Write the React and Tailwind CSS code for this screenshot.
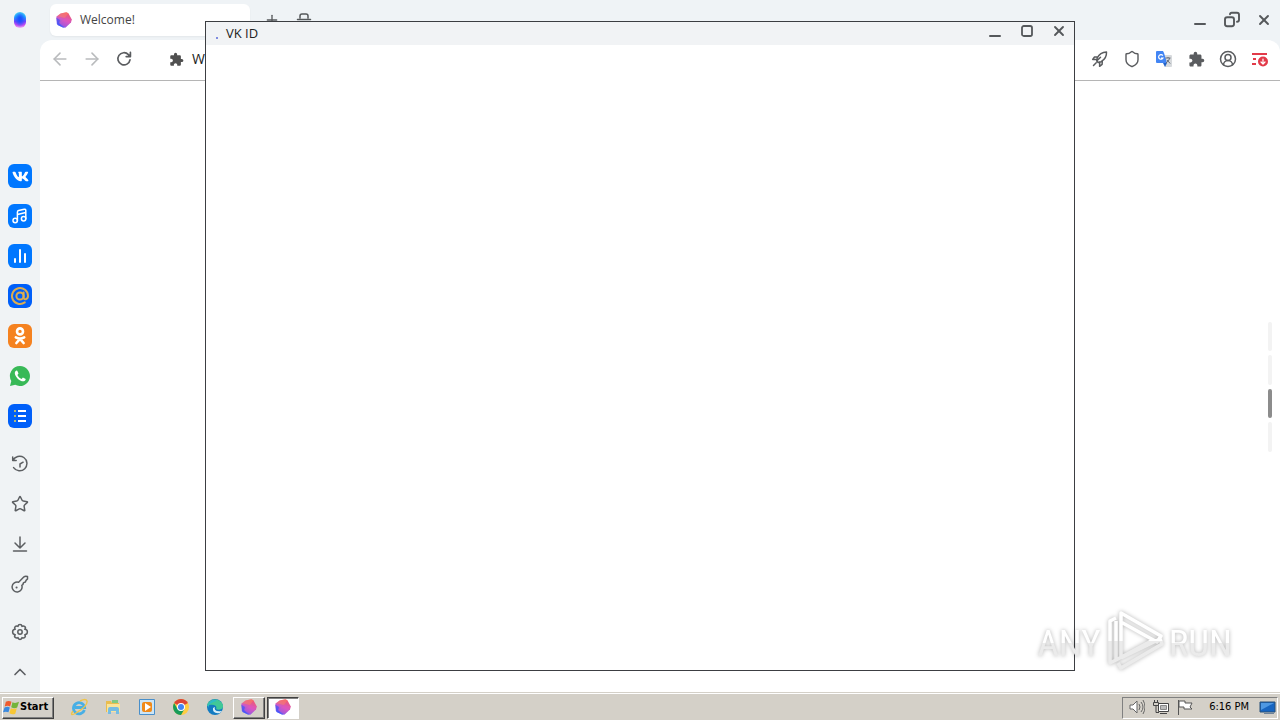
import React from "react";
import { ArrowLeft, ArrowRight, Shield, CircleUserRound, Star, ChevronUp, Plus, X } from "lucide-react";
import { MdExtension } from "react-icons/md";
import { FaVk } from "react-icons/fa";

function Gem({ id, size }) {
  return (
    <svg width={size} height={size} viewBox="0 0 16 16" aria-hidden="true">
      <defs>
        <linearGradient id={id} x1="0.7" y1="0" x2="0.2" y2="1">
          <stop offset="0" stopColor="#f5586c" />
          <stop offset="0.5" stopColor="#cf5ac4" />
          <stop offset="1" stopColor="#4a5cff" />
        </linearGradient>
      </defs>
      <path d="M4.6 1.6 10.4.3 12.4 1.2 15.8 7.6 15 10.4 9.6 15.4 7.4 15.7 1.6 13 .8 11.2.3 5.8 1 4.2Z" fill={`url(#${id})`} />
      <path d="M4.6 1.6 10.4.3 12.4 1.2 9 6 1 4.2Z" fill="#ff8560" opacity=".5" />
      <path d="M9 6 15.8 7.6 9.6 15.4 3 11Z" fill="#ef50c0" opacity=".35" />
      <path d="M.3 5.8 4 8 3 11 7.4 15.7 1.6 13Z" fill="#3454ff" opacity=".6" />
    </svg>
  );
}

function IconButton({ label, children, className = "" }) {
  return (
    <button type="button" aria-label={label} className={`flex size-6 shrink-0 items-center justify-center ${className}`}>
      {children}
    </button>
  );
}

const line = { fill: "none", stroke: "currentColor", strokeWidth: 1.5, strokeLinecap: "round", strokeLinejoin: "round" };

function Sidebar() {
  return (
    <nav aria-label="Sidebar" className="flex w-10 shrink-0 flex-col items-center bg-[#f0f3f5] pt-2 pb-2 text-[#5c5f62]">
      <IconButton label="Assistant">
        <span className="h-4 w-3 rounded-full bg-[radial-gradient(ellipse_at_50%_45%,#1a50ff_15%,transparent_65%),linear-gradient(#55e4f4,#1fa4ff_32%,#6b45ff_58%,#d04df0_82%,#efb6f5)]" />
      </IconButton>
      <div className="mt-33 flex flex-col gap-4">
        <IconButton label="VK" className="rounded-md bg-[#0077ff] text-white"><FaVk size={17} /></IconButton>
        <IconButton label="Music" className="rounded-md bg-[#0077ff] text-white">
          <svg width="18" height="18" viewBox="0 0 18 18" {...line}>
            <circle cx="4.2" cy="13.5" r="2.2" /><circle cx="12.6" cy="11.7" r="2.2" />
            <path d="M6.4 13.5V5.2Q6.4 3.9 7.6 3.6L13.3 2.3Q14.8 2.1 14.8 3.4V11.7M6.4 7.4 14.8 5.5" />
          </svg>
        </IconButton>
        <IconButton label="Charts" className="rounded-md bg-[#0077ff] text-white">
          <svg width="16" height="16" viewBox="0 0 16 16" {...line} strokeWidth="2"><path d="M3 11v3M8 2v12M13 6v8" /></svg>
        </IconButton>
        <IconButton label="Mail" className="rounded-md bg-[#005ff9] text-[#ddad50]">
          <svg width="20" height="20" viewBox="0 0 20 20" {...line} strokeWidth="2">
            <circle cx="10" cy="10" r="3.6" /><path d="M13.6 6.5v4.8c0 3.2 4.4 2.2 4.4-1.3A8 8 0 1 0 14.8 16.4" />
          </svg>
        </IconButton>
        <IconButton label="OK" className="rounded-md bg-[#f58220] text-white">
          <svg width="18" height="20" viewBox="0 0 18 20" {...line} strokeWidth="2.6">
            <circle cx="9" cy="5.4" r="3" /><path d="M4.8 11.3Q9 13.8 13.2 11.3M9 12.8 5.4 17M9 12.8l3.6 4.2" />
          </svg>
        </IconButton>
        <IconButton label="WhatsApp">
          <svg width="22" height="22" viewBox="0 0 22 22">
            <path d="M11 1a10 10 0 1 1-4.8 18.8L1 21l1.3-5A10 10 0 0 1 11 1Z" fill="#38b957" />
            <path d="M7.4 5.6c-1.6.7-2 2.5-1.2 4.3 1.3 3 3.7 5.4 6.7 6.3 1.9.5 3.8-.4 3.8-2.3l-2.8-1.5-1.3 1.5c-2-.8-3.3-2.1-4.2-4l1.1-1.3-1.2-2.9Z" fill="white" />
          </svg>
        </IconButton>
        <IconButton label="Services" className="rounded-md bg-[#005ff9]">
          <svg width="16" height="16" viewBox="0 0 16 16" fill="none" strokeWidth="2">
            <path d="M6 3h8M6 8h8M6 13h8" stroke="white" /><path d="M2 3h2M2 8h2M2 13h2" stroke="#aeb879" />
          </svg>
        </IconButton>
      </div>
      <div className="mt-6 flex flex-col gap-4">
        <IconButton label="History">
          <svg width="18" height="18" viewBox="0 0 18 18" {...line}>
            <path d="M1.7 2v3.4h3.5M2 5.4A7.3 7.3 0 1 1 2.6 12.6M12.1 7.2 9 9v3" />
          </svg>
        </IconButton>
        <IconButton label="Bookmarks"><Star size={18} strokeWidth={2} /></IconButton>
        <IconButton label="Downloads">
          <svg width="18" height="18" viewBox="0 0 18 18" {...line}><path d="M9 2v11M4 8l5 5 5-5M2.5 16h13" /></svg>
        </IconButton>
        <IconButton label="Passwords">
          <svg width="18" height="18" viewBox="0 0 18 18" {...line}>
            <path d="M7.6 7.2 13 1.8Q14 1 16.5 1.5V4L15 5.4 14.4 7l-1.8.6-.8 2-1 .7a5 5 0 1 1-3.2-3.1Z" /><path d="M5.5 12.5h.1" strokeWidth="2" />
          </svg>
        </IconButton>
      </div>
      <div className="mt-auto flex flex-col gap-4">
        <IconButton label="Settings">
          <svg width="18" height="18" viewBox="0 0 18 18" {...line}>
            <path d="M7 3.4Q7.2 1.6 9 1.6T11 3.4Q12.5 2.5 13.8 3.6T13.8 6.3Q16.4 6.6 16.4 9T13.8 11.7Q15 13.3 13.8 14.4T11 14.6Q10.8 16.4 9 16.4T7 14.6Q5.5 15.5 4.2 14.4T4.2 11.7Q1.6 11.4 1.6 9T4.2 6.3Q3 4.7 4.2 3.6T7 3.4Z" />
            <circle cx="9" cy="9" r="2.2" />
          </svg>
        </IconButton>
        <IconButton label="Collapse"><ChevronUp size={20} strokeWidth={2} /></IconButton>
      </div>
    </nav>
  );
}

function TabStrip() {
  return (
    <div className="flex h-10 items-center bg-[#eff3f6] pl-2.5 pr-1 text-[#55585b]">
      <button type="button" className="flex h-8 w-50 items-center gap-2 rounded-md bg-white px-1.5 text-xs text-[#444] shadow-xs">
        <Gem id="tabGem" size={16} />
        Welcome!
      </button>
      <IconButton label="New tab" className="ml-2.5"><Plus size={16} /></IconButton>
      <IconButton label="Incognito" className="ml-2">
        <svg width="16" height="16" viewBox="0 0 16 16" {...line}><path d="M4 6V4q0-2 2-2h4q2 0 2 2v2M1.5 7.5h13" /></svg>
      </IconButton>
      <div className="ml-auto flex gap-2">
        <IconButton label="Minimize"><svg width="16" height="16" viewBox="0 0 16 16" {...line} strokeWidth="2"><path d="M3 12h10" /></svg></IconButton>
        <IconButton label="Restore">
          <svg width="18" height="18" viewBox="0 0 18 18" {...line} strokeWidth="1.9"><rect x="2" y="6.2" width="9" height="9" rx="2.2" /><path d="M7 3.3Q7 1.8 8.7 1.8H14q2 0 2 2v5q0 2-2 2" /></svg>
        </IconButton>
        <IconButton label="Close"><X size={16} strokeWidth={2.8} /></IconButton>
      </div>
    </div>
  );
}

function Toolbar() {
  return (
    <div className="bg-[#eff3f6]">
      <div className="flex h-[41px] items-center gap-2 rounded-t-xl border-b border-[#b5b5b5] bg-white px-2 pb-0.5 text-[#5a5c5f]">
        <IconButton label="Back" className="text-[#b9bbbd]"><ArrowLeft size={20} strokeWidth={1.9} /></IconButton>
        <IconButton label="Forward" className="text-[#b9bbbd]"><ArrowRight size={20} strokeWidth={1.9} /></IconButton>
        <IconButton label="Reload">
          <svg width="18" height="18" viewBox="0 0 18 18" {...line} strokeWidth="1.7"><path d="M15 9.8A6.1 6.1 0 1 1 13.4 4.6L15 6.4M15.4 2.4v4.2h-4.2" /></svg>
        </IconButton>
        <button type="button" className="ml-6 flex items-center gap-2 pl-px text-sm text-[#222]">
          <MdExtension size={15} className="text-[#505050]" />W
        </button>
        <div className="ml-auto flex gap-2">
          <IconButton label="Turbo">
            <svg width="18" height="18" viewBox="0 0 18 18" {...line}>
              <path d="M15.5 2Q9 2.2 6.2 8l-.5 3 1.4 1.4 3-.7Q15.8 8.5 15.5 2ZM6.8 6.8 3.5 7 1.7 9.5l4.2-.2M11.3 11.2l-.2 3.2-2.5 1.9.1-4.2M5.2 12.8l-2.7 2.7M5.7 11l3.8-3.8" />
            </svg>
          </IconButton>
          <IconButton label="Protection"><Shield size={18} strokeWidth={1.9} /></IconButton>
          <IconButton label="Translate">
            <svg width="16" height="16" viewBox="0 0 16 16">
              <path d="M6 4h9q1 0 1 1v10q0 1-1 1H9Z" fill="#d7dadd" />
              <path d="M1 0h6l1 2 3 10H1q-1 0-1-1V1q0-1 1-1Z" fill="#4285f4" />
              <path d="m7 12 4 0-2 4Z" fill="#2362c7" />
              <path d="M9.5 7h5M12 6v1m1.7.2Q13 10 10 12m1-3 3.2 3.5" stroke="#646b78" fill="none" />
              <path d="M6.8 4.6A2.3 2.3 0 1 0 7 7H5" stroke="white" strokeWidth="1.2" fill="none" />
            </svg>
          </IconButton>
          <IconButton label="Extensions"><MdExtension size={17} /></IconButton>
          <IconButton label="Profile"><CircleUserRound size={18} strokeWidth={2} /></IconButton>
          <IconButton label="Updates" className="text-[#e23a49]">
            <svg width="18" height="18" viewBox="0 0 18 18" {...line} strokeWidth="2">
              <path d="M1 4h15M2 9h3M1 14h4" strokeLinecap="butt" strokeWidth="2" /><circle cx="12" cy="11.5" r="5" fill="currentColor" stroke="none" />
              <path d="M12 9v5M10 12l2 2 2-2" stroke="white" strokeWidth="1.2" />
            </svg>
          </IconButton>
        </div>
      </div>
    </div>
  );
}

function Popup() {
  return (
    <section aria-label="VK ID" className="absolute inset-x-[205px] top-[21px] bottom-[21px] flex flex-col border border-[#3c3e42] bg-white">
      <header className="flex h-[23px] shrink-0 items-center bg-[#f1f3f5] pr-[3px] pl-2.5 text-[#55585b]">
        <span className="mt-2 size-0.5 rounded-full bg-[#5968d8]" />
        <h1 className="ml-2 grow text-[13px] text-[#222]">VK ID</h1>
        <div className="flex gap-2 pb-1.5">
          <IconButton label="Minimize popup"><svg width="16" height="16" viewBox="0 0 16 16" {...line} strokeWidth="2"><path d="M3 13h10" /></svg></IconButton>
          <IconButton label="Maximize popup"><svg width="14" height="14" viewBox="0 0 14 14" {...line} strokeWidth="1.8"><rect x="2" y="2" width="10" height="10" rx="1.8" /></svg></IconButton>
          <IconButton label="Close popup"><X size={16} strokeWidth={2.8} /></IconButton>
        </div>
      </header>
    </section>
  );
}

function Watermark() {
  return (
    <div className="pointer-events-none absolute right-12 bottom-5 flex h-16 items-center gap-1 font-['Roboto_Condensed','Open_Sans_Condensed','DejaVu_Sans_Condensed',sans-serif] text-[37px] leading-none drop-shadow-[0_0_2px_rgba(0,0,0,0.3)]">
      <span className="bg-linear-to-b from-white from-55% to-[#ebebeb] to-55% bg-clip-text pt-1.5 text-transparent">ANY</span>
      <svg width="60" height="62" viewBox="0 0 60 62" fill="none" strokeWidth="3.5" strokeLinejoin="round">
        <defs><linearGradient id="mark" gradientUnits="userSpaceOnUse" x1="0" y1="0" x2="0" y2="62"><stop offset=".52" stopColor="white" /><stop offset=".52" stopColor="#ebebeb" /></linearGradient></defs>
        <path d="M16 49V4L56 27 52 33 16 13M11 9 5 12V54L11 51V12M11 51 48 31M16 49 55 30 57 35 16 59 13 54" stroke="url(#mark)" />
      </svg>
      <span className="bg-linear-to-b from-white from-55% to-[#ebebeb] to-55% bg-clip-text pt-1.5 text-transparent">RUN</span>
    </div>
  );
}

const raised = "border border-t-white border-l-white border-r-[#404040] border-b-[#404040] shadow-[inset_-1px_-1px_0_#808080]";

function Taskbar() {
  return (
    <footer className="flex h-7 shrink-0 items-center border-t border-[#d4d0c8] bg-[#d4d0c8] pr-0.5 pl-0.5 shadow-[inset_0_1px_0_white] font-['DejaVu_Sans_Condensed','DejaVu_Sans',sans-serif]">
      <button type="button" className={`mt-0.5 flex h-[22px] w-[52px] items-center text-[11px] font-bold text-black ${raised}`}>
        <svg width="17" height="17" viewBox="0 0 18 18" className="shrink-0" aria-hidden="true">
          <path d="M3 3Q6 1 9 3L7.5 8Q5 6.5 1.8 8Z" fill="#ef5b2e" /><path d="M10 3.5Q13 5 17 3L15 9q-3 1.5-6.3-.3Z" fill="#72b43a" />
          <path d="M1.6 9Q5 7.5 7.2 9L5.8 14Q3 12.8 0 14Z" fill="#3b8adf" /><path d="M8.3 9.7q3 1.4 6.3.2L13 15.5Q10 17 6.8 15Z" fill="#f8c735" />
        </svg>
        <span>Start</span>
      </button>
      <div className="ml-[13px] flex items-center gap-2.5">
        <IconButton label="Internet Explorer">
          <svg width="18" height="18" viewBox="0 0 18 18" fill="none">
            <path d="M14.4 12A5.6 5.6 0 1 1 14.6 9.5H5" stroke="#48afe5" strokeWidth="2.8" />
            <path d="M3 13Q-1 19 6 15 18 8 17 3 16 0 10 3" stroke="#efc44a" strokeWidth="1.4" />
          </svg>
        </IconButton>
        <IconButton label="Explorer">
          <svg width="16" height="16" viewBox="0 0 16 16"><path d="M1 2h5l1 2h7v9H1Z" fill="#e9bd50" /><path d="M2 5h13v8H2Z" fill="#fae49a" /><path d="M3 15v-5q0-2 2-2h7q2 0 2 2v5h-3v-3H6v3Z" fill="#75bce3" /><path d="M7 1h6v3H7Z" fill="#80c984" /></svg>
        </IconButton>
        <IconButton label="Media player">
          <svg width="16" height="16" viewBox="0 0 16 16"><path d="M.5.5h15v15H.5Z" fill="#cce5f6" stroke="#498fca" /><rect x="3" y="3" width="10" height="10" rx="2" fill="#f08a19" /><path d="m6 4 6 4-6 4Z" fill="white" /></svg>
        </IconButton>
        <IconButton label="Chrome">
          <svg width="16" height="16" viewBox="0 0 16 16"><circle cx="8" cy="8" r="8" fill="#ffcd43" /><path d="M8 8 1.1 4A8 8 0 0 1 14.9 4Z" fill="#dc4437" /><path d="M8 8 4.5 10 1.1 4A8 8 0 0 0 8 16l3.5-6Z" fill="#179b5a" /><circle cx="8" cy="8" r="4" fill="white" /><circle cx="8" cy="8" r="3" fill="#4285f4" /></svg>
        </IconButton>
        <IconButton label="Edge">
          <svg width="16" height="16" viewBox="0 0 16 16"><circle cx="8" cy="8" r="8" fill="#137bc1" /><path d="M0 7C1-1 13-2 16 6c1 4-4 6-7 4 2-3-3-6-9-3Z" fill="#41c897" /><path d="M1 6Q5-1 10 2 2 3 1 9Z" fill="#2cb8cd" /><path d="M8 8q-2 5 7 4l-2 2Q5 15 6 9Z" fill="#d7eef8" /></svg>
        </IconButton>
      </div>
      <button type="button" aria-label="Browser" className={`mt-0.5 ml-1.5 flex h-[22px] w-8 items-center justify-center pb-0.5 ${raised}`}><Gem id="taskGem" size={16} /></button>
      <button type="button" aria-label="VK ID window" className="mt-0.5 ml-0.5 flex h-[22px] w-8 items-center justify-center border border-t-[#404040] border-r-white border-b-white border-l-[#404040] bg-white pb-0.5 shadow-[inset_1px_1px_0_#808080]"><Gem id="activeGem" size={16} /></button>
      <div className="mt-0.5 ml-auto flex h-[22px] items-center gap-2 border border-t-[#808080] border-r-white border-b-white border-l-[#808080] pb-0.5 pl-1.5 text-[11px] text-black">
        <svg width="16" height="16" viewBox="0 0 16 16" fill="none" stroke="#666"><path d="M1 6h3l4-4v12l-4-4H1Z" fill="white" /><path d="M10 5q2 3 0 6M12 3q4 5 0 10M14 1q4 7 0 14" /></svg>
        <svg width="16" height="16" viewBox="0 0 16 16" fill="none" stroke="#444"><path d="M5.5 4.5h10v8h-10Z" fill="white" /><path d="M7.5 6.5h6v4h-6Z" fill="#bbb" stroke="#888" /><path d="M7 14.5h7M1.5 1v3M4.5 1v3M.5 3.5h5v3h-5ZM3 7v6.5h3" /></svg>
        <svg width="16" height="16" viewBox="0 0 16 16" fill="white" stroke="#555"><path d="M1.5 1v15M2 2h6v2h7l-2 4 2 2H7V8H2Z" /></svg>
        <time className="ml-2 pt-0.5">6:16 PM</time>
        <svg width="18" height="16" viewBox="0 0 18 16" className="ml-0.5"><path d="M1 3h15v10H1Z" fill="#1765c1" stroke="#295078" /><path d="M2 4h13L2 11Z" fill="#4e98e3" /><path d="M5 14h10v1H5Z" fill="#6e8298" /></svg>
      </div>
    </footer>
  );
}

export default function App() {
  return (
    <div className="flex h-screen flex-col overflow-hidden bg-white font-['Open_Sans','Noto_Sans',sans-serif]">
      <div className="relative flex min-h-0 flex-1">
        <Sidebar />
        <main className="flex min-w-0 flex-1 flex-col">
          <TabStrip />
          <Toolbar />
          <div className="flex flex-1 items-center justify-end pr-2">
            <div className="flex flex-col gap-1">
              <span className="h-[29px] w-1 rounded-sm bg-[#f3f3f3]" />
              <span className="h-[30px] w-1 rounded-sm bg-[#f3f3f3]" />
              <span className="h-[29px] w-1 rounded-sm bg-[#8c8c8c]" />
              <span className="h-[30px] w-1 rounded-sm bg-[#f3f3f3]" />
            </div>
          </div>
        </main>
        <Popup />
        <Watermark />
      </div>
      <Taskbar />
    </div>
  );
}
